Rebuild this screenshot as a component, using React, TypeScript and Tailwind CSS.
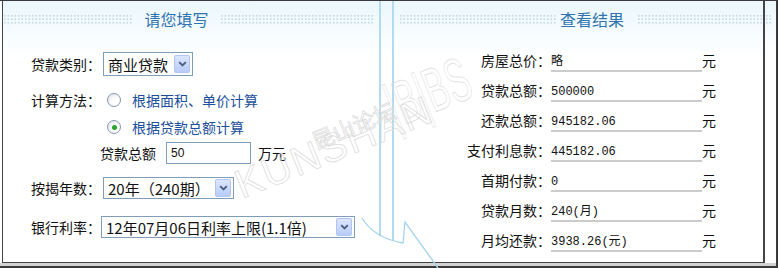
import React from "react";

const dots =
  "h-[11px] bg-[radial-gradient(circle,#c9dbe5_1px,transparent_1.3px)] bg-[length:3.5px_3.5px]";

function DropButton() {
  return (
    <span className="flex h-[18px] w-[16px] shrink-0 items-center justify-center rounded-[2px] border border-[#b1c5f2] bg-[linear-gradient(#dce6fe,#b8ccf8)]">
      <svg width="9" height="6" viewBox="0 0 9 6">
        <path d="M1.2 1.2 L4.5 4.5 L7.8 1.2" fill="none" stroke="#4a5f86" strokeWidth="1.9" />
      </svg>
    </span>
  );
}

function Select({ text, className = "" }: { text: string; className?: string }) {
  return (
    <div
      className={`flex items-center justify-between border border-[#7f9db9] bg-white pl-[4px] pr-[2px] text-[15px] leading-none text-[#111] ${className}`}
    >
      <span className="whitespace-nowrap">{text}</span>
      <DropButton />
    </div>
  );
}

function Radio({ checked = false, className = "" }: { checked?: boolean; className?: string }) {
  return (
    <span
      className={`flex h-[14px] w-[14px] shrink-0 items-center justify-center rounded-full border border-[#8699b0] bg-[radial-gradient(circle_at_65%_65%,#ffffff_30%,#d9dee5)] ${className}`}
    >
      {checked && <span className="h-[5px] w-[5px] rounded-full bg-[#2aa52a]" />}
    </span>
  );
}

function ResultRow({ label, value }: { label: string; value: string }) {
  return (
    <div className="flex h-[30px] items-center">
      <span className="w-[157px] text-right text-[14px] text-[#111]">{label}</span>
      <div className="flex h-[24px] w-[151px] items-center border-b-2 border-[#cccccc] pt-[5px] font-['Liberation_Mono','Noto_Sans_CJK_SC',monospace] text-[12px] text-[#111]">
        {value}
      </div>
      <span className="text-[14px] text-[#111]">元</span>
    </div>
  );
}

const results = [
  { label: "房屋总价：", value: "略" },
  { label: "贷款总额：", value: "500000" },
  { label: "还款总额：", value: "945182.06" },
  { label: "支付利息款：", value: "445182.06" },
  { label: "首期付款：", value: "0" },
  { label: "贷款月数：", value: "240(月)" },
  { label: "月均还款：", value: "3938.26(元)" },
];

export default function App() {
  return (
    <div className="relative h-[268px] w-[780px] overflow-hidden bg-white font-['Noto_Sans_CJK_SC',sans-serif]">
      <div className="flex h-[268px] w-[778px] flex-col border-b-2 border-r-2 border-t border-[#3a3a3a]">
        <div className="flex h-[262px]">
          {/* framed calculator */}
          <div className="ml-[2px] flex w-[763px] border-b border-l border-r-2 border-[#444] bg-[linear-gradient(#ebf7fc,#f8fdff_38px,#ffffff_60px)]">
            {/* left: input */}
            <div className="w-[376px] text-[14px] text-[#111]">
              <div className="flex h-[36px] items-center">
                <div className={`w-[130px] ${dots}`} />
                <div className="w-[87px] text-center text-[16px] text-[#2f74b0]">请您填写</div>
                <div className={`mr-[4px] flex-1 ${dots}`} />
              </div>

              <div className="mt-[15px] flex h-[24px] items-center">
                <span className="w-[98px] text-right">贷款类别：</span>
                <Select text="商业贷款" className="ml-[2px] h-[24px] w-[90px]" />
              </div>

              <div className="mt-[14px] flex h-[20px] items-center">
                <span className="w-[98px] text-right">计算方法：</span>
                <Radio className="ml-[6px]" />
                <span className="ml-[11px] text-[#1b4f9c]">根据面积、单价计算</span>
              </div>

              <div className="mt-[7px] flex h-[20px] items-center pl-[104px]">
                <Radio checked />
                <span className="ml-[11px] text-[#1b4f9c]">根据贷款总额计算</span>
              </div>

              <div className="mt-[5px] flex h-[22px] items-center pl-[97px]">
                <span>贷款总额</span>
                <div className="ml-[10px] flex h-[22px] w-[85px] items-center border border-[#7f9db9] bg-white pl-[4px] font-['Liberation_Sans',sans-serif] text-[12px]">
                  50
                </div>
                <span className="ml-[7px]">万元</span>
              </div>

              <div className="mt-[13px] flex h-[22px] items-center">
                <span className="w-[98px] text-right">按揭年数：</span>
                <Select text="20年（240期）" className="ml-[2px] h-[22px] w-[131px]" />
              </div>

              <div className="mt-[17px] flex h-[22px] items-center">
                <span className="w-[98px] text-right">银行利率：</span>
                <Select text="12年07月06日利率上限(1.1倍)" className="ml-0 h-[22px] w-[254px]" />
              </div>
            </div>

            {/* divider */}
            <div className="flex w-[15px] justify-between">
              <div className="h-[235px] w-[2px] bg-[#b2dbef]" />
              <div className="h-[240px] w-[2px] bg-[#b2dbef]" />
            </div>

            {/* right: results */}
            <div className="flex-1">
              <div className="flex h-[36px] items-center">
                <div className={`ml-[5px] w-[158px] ${dots}`} />
                <div className="w-[80px] pl-[3px] text-[16px] text-[#2f74b0]">查看结果</div>
                <div className={`flex-1 ${dots}`} />
              </div>
              <div className="mt-[8px]">
                {results.map((r) => (
                  <ResultRow key={r.label} label={r.label} value={r.value} />
                ))}
              </div>
            </div>
          </div>

          {/* cut-off neighbour */}
          <div className="flex-1 bg-[linear-gradient(#ebf7fc,#ffffff_50px)] pt-[13px]">
            <div className={`w-[6px] ${dots}`} />
          </div>
        </div>
        <div className="h-[3px] bg-[#d2d2d2]" />
      </div>

      {/* watermark */}
      <svg className="pointer-events-none absolute left-0 top-0" width="780" height="268">
        <g fill="none" stroke="#dddddd" strokeWidth="0.8">
          <text
            transform="translate(242 199) rotate(-22)"
            fontSize="40"
            fontFamily="Liberation Sans, sans-serif"
            letterSpacing="2"
          >
            KUNSHAN
          </text>
          <text transform="translate(316 150) rotate(-22)" fontSize="22" fontFamily="Noto Sans CJK SC, sans-serif">
            昆山论坛
          </text>
          <text
            transform="translate(396 128) rotate(-22)"
            fontSize="62"
            fontFamily="Liberation Sans, sans-serif"
            textLength="86"
            lengthAdjust="spacingAndGlyphs"
          >
            |B|BS
          </text>
        </g>
        <path d="M362 218 Q374 238 403 243 L405 222 L438 268" stroke="#a6d4ec" strokeWidth="1.3" fill="none" />
      </svg>
    </div>
  );
}
